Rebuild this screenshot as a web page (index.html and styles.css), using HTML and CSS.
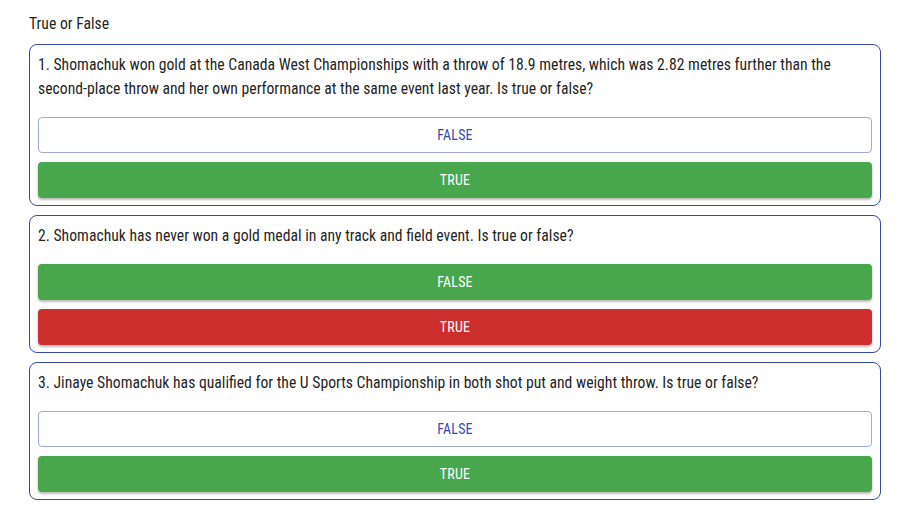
FILE: index.html
```html
<!doctype html>
<html lang="en">
<head>
 <meta charset="UTF-8">
 <title>True or False</title>
 <link rel="stylesheet" href="styles.css">
</head>
<body>
<div class="quiz">
 <div class="quiz-title">True or False</div>

 <div class="card">
  <p class="question">1. Shomachuk won gold at the Canada West Championships with a throw of 18.9 metres, which was 2.82 metres further than the second-place throw and her own performance at the same event last year. Is true or false?</p>
  <div class="answers">
   <button class="btn btn-outline">False</button>
   <button class="btn btn-green">True</button>
  </div>
 </div>

 <div class="card">
  <p class="question">2. Shomachuk has never won a gold medal in any track and field event. Is true or false?</p>
  <div class="answers">
   <button class="btn btn-green">False</button>
   <button class="btn btn-red">True</button>
  </div>
 </div>

 <div class="card">
  <p class="question">3. Jinaye Shomachuk has qualified for the U Sports Championship in both shot put and weight throw. Is true or false?</p>
  <div class="answers">
   <button class="btn btn-outline">False</button>
   <button class="btn btn-green">True</button>
  </div>
 </div>
</div>
</body>
</html>
```

FILE: styles.css
```css
*{
 margin:0;
 padding:0;
 box-sizing:border-box;
}
body{
 font-family:"Roboto Condensed", Roboto, "Liberation Sans", sans-serif;
 font-stretch:condensed;
 color:#1f1f1f;
 background:#fff;
}
.quiz{
 padding:12px 27px 0 29px;
 display:flex;
 flex-direction:column;
 gap:9px;
}
.quiz-title{
 font-size:15.7px;
 line-height:24px;
 margin-bottom:-1px;
}
.card{
 border:1px solid #3949ab;
 border-radius:8px;
 padding:8px 8px 7px;
}
.question{
 font-size:15.7px;
 line-height:24px;
}
.answers{
 margin-top:16px;
 display:flex;
 flex-direction:column;
 gap:9px;
}
.btn{
 font-family:inherit;
 font-stretch:condensed;
 height:36px;
 border-radius:4px;
 border:1px solid transparent;
 font-size:14px;
 text-transform:uppercase;
 letter-spacing:0.2px;
 cursor:pointer;
}
.btn-outline{
 background:#fff;
 border-color:#9fa8da;
 color:#3949ab;
}
.btn-green{
 background:#48a64c;
 color:#fff;
 box-shadow:0 2px 2px rgba(0,0,0,0.2), 0 1px 4px rgba(0,0,0,0.12);
}
.btn-red{
 background:#cd2e2e;
 color:#fff;
 box-shadow:0 2px 2px rgba(0,0,0,0.2), 0 1px 4px rgba(0,0,0,0.12);
}
```
